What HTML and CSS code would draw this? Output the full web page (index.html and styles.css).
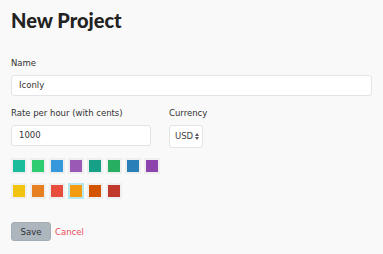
FILE: index.html
```html
<!DOCTYPE html>
<html>
<head>
<meta charset="utf-8">
<link rel="stylesheet" href="styles.css">
</head>
<body>
<div class="page">
  <h1 class="title">New Project</h1>
  <div class="field name-field">
    <label class="label">Name</label>
    <div class="input wide">Iconly</div>
  </div>
  <div class="row">
    <div class="field">
      <label class="label">Rate per hour (with cents)</label>
      <div class="input rate">1000</div>
    </div>
    <div class="field">
      <label class="label">Currency</label>
      <div class="select">USD <span class="arrows"><svg width="4" height="7" viewBox="0 0 4 7"><path d="M0 3 L2 0 L4 3 Z M0 4 L2 7 L4 4 Z" fill="#555"/></svg></span></div>
    </div>
  </div>
  <div class="swatches">
    <span class="sw" style="background:#1abc9c"></span>
    <span class="sw" style="background:#2ecc71"></span>
    <span class="sw" style="background:#3498db"></span>
    <span class="sw" style="background:#9b59b6"></span>
    <span class="sw" style="background:#16a085"></span>
    <span class="sw" style="background:#27ae60"></span>
    <span class="sw" style="background:#2980b9"></span>
    <span class="sw" style="background:#8e44ad"></span>
  </div>
  <div class="swatches">
    <span class="sw" style="background:#f1c40f"></span>
    <span class="sw" style="background:#e67e22"></span>
    <span class="sw" style="background:#e74c3c"></span>
    <span class="sw selected" style="background:#f39c12"></span>
    <span class="sw" style="background:#d35400"></span>
    <span class="sw" style="background:#c0392b"></span>
  </div>
  <div class="actions">
    <button class="btn">Save</button>
    <a class="cancel">Cancel</a>
  </div>
</div>
</body>
</html>
```
FILE: styles.css
```css
html, body {
  margin: 0;
  padding: 0;
  background: #f9f9f9;
}
body {
  font-family: "DejaVu Sans", sans-serif;
  color: #333;
}
.page {
  padding: 8px 11px 0 11px;
}
.title {
  margin: 0;
  font-family: "Lato", "DejaVu Sans", sans-serif;
  font-size: 20px;
  line-height: 24px;
  font-weight: 900;
  color: #222;
}
.field {
  display: flex;
  flex-direction: column;
}
.name-field {
  margin-top: 26px;
}
.label {
  font-size: 8.5px;
  line-height: 11px;
  color: #333;
  margin-bottom: 6px;
}
.input {
  box-sizing: border-box;
  height: 21px;
  background: #fff;
  border: 1px solid #e2e4e6;
  border-radius: 3px;
  font-size: 8.5px;
  line-height: 19px;
  padding: 0 7px;
  color: #333;
}
.wide {
  width: 361px;
}
.row {
  display: flex;
  gap: 18px;
  margin-top: 12px;
}
.rate {
  width: 140px;
}
.select {
  box-sizing: border-box;
  width: 34px;
  height: 23px;
  background: #fff;
  border: 1px solid #e2e4e6;
  border-radius: 3px;
  font-size: 8.5px;
  line-height: 21px;
  padding-left: 5px;
  display: flex;
  align-items: center;
  gap: 2px;
  color: #444;
}
.arrows {
  display: flex;
}
.swatches {
  display: flex;
  gap: 3px;
  margin-top: 10px;
}
.swatches + .swatches {
  margin-top: 9px;
}
.sw {
  width: 12px;
  height: 12px;
  border: 2px solid #efefef;
}
.sw.selected {
  border-color: #b5e8f0;
}
.actions {
  display: flex;
  align-items: center;
  gap: 4px;
  margin-top: 23px;
}
.btn {
  width: 40px;
  height: 19px;
  background: #adb5bd;
  border: 1px solid #a4acb4;
  border-radius: 3px;
  font-family: "DejaVu Sans", sans-serif;
  font-size: 8.5px;
  color: #2d3238;
  padding: 0;
}
.cancel {
  font-size: 8.5px;
  color: #e8505b;
}
```
